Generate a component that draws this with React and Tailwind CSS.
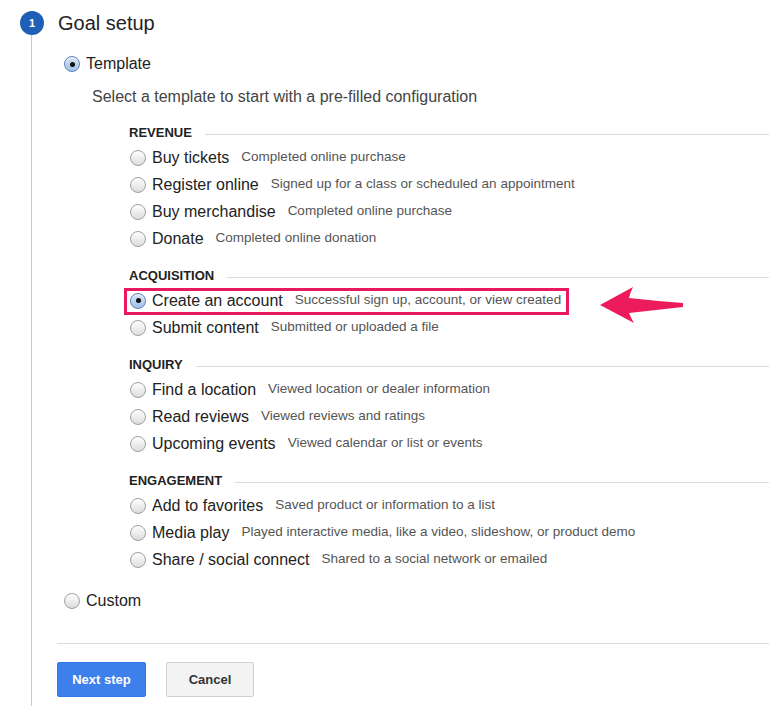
import React from 'react'

const sections = [
  {
    title: 'REVENUE',
    items: [
      ['Buy tickets', 'Completed online purchase'],
      ['Register online', 'Signed up for a class or scheduled an appointment'],
      ['Buy merchandise', 'Completed online purchase'],
      ['Donate', 'Completed online donation'],
    ],
  },
  {
    title: 'ACQUISITION',
    items: [
      ['Create an account', 'Successful sign up, account, or view created', true],
      ['Submit content', 'Submitted or uploaded a file'],
    ],
  },
  {
    title: 'INQUIRY',
    items: [
      ['Find a location', 'Viewed location or dealer information'],
      ['Read reviews', 'Viewed reviews and ratings'],
      ['Upcoming events', 'Viewed calendar or list or events'],
    ],
  },
  {
    title: 'ENGAGEMENT',
    items: [
      ['Add to favorites', 'Saved product or information to a list'],
      ['Media play', 'Played interactive media, like a video, slideshow, or product demo'],
      ['Share / social connect', 'Shared to a social network or emailed'],
    ],
  },
]

function Radio({ checked }) {
  if (checked) {
    return (
      <span className="w-4 h-4 shrink-0 rounded-full border border-[#5b7fb3] bg-gradient-to-b from-[#d6e6fa] to-[#9fc0ea] flex items-center justify-center shadow-[inset_0_1px_1px_rgba(255,255,255,0.8)]">
        <span className="w-[5px] h-[5px] rounded-full bg-[#111]" />
      </span>
    )
  }
  return (
    <span className="w-4 h-4 shrink-0 rounded-full border border-[#a0a0a0] bg-gradient-to-b from-white to-[#dcdcdc]" />
  )
}

function Option({ label, desc, checked }) {
  return (
    <div className="h-[27px] flex">
      <div className="relative h-full flex items-center">
        {checked && (
          <span className="absolute left-[-6px] right-[-8px] top-[1px] bottom-[-1px] border-[3px] border-[#e8195e]" />
        )}
        <Radio checked={checked} />
        <span className="ml-[6px] text-[16px] text-[#222]">{label}</span>
        <span className="ml-[12px] text-[13.5px] text-[#555]">{desc}</span>
      </div>
    </div>
  )
}

export default function App() {
  return (
    <div className="relative bg-white min-h-[706px] flex overflow-hidden" style={{ fontFamily: '"Liberation Sans", Arial, sans-serif' }}>
      <div className="w-[57px] shrink-0 flex flex-col pl-[20px] pt-[11px]">
        <div className="w-6 h-6 rounded-full bg-[#1f5fb5] text-white text-[11px] font-bold flex items-center justify-center">1</div>
        <div className="ml-[11px] w-px flex-1 bg-[#c8c8c8]" />
      </div>

      <div className="flex-1 flex flex-col pb-[9px]">
        <div className="h-[46px] flex items-center text-[20px] text-[#222] pl-px">Goal setup</div>

        <div className="mt-[6px] h-6 flex items-center pl-[7px]">
          <Radio checked />
          <span className="ml-[6px] text-[16px] text-[#222]">Template</span>
        </div>

        <div className="mt-[9px] h-6 flex items-center pl-[35px] text-[16px] text-[#444]">
          Select a template to start with a pre-filled configuration
        </div>

        <div className="pl-[73px] mt-[13px] flex flex-col">
          {sections.map((s, i) => (
            <div key={s.title} className={i === 0 ? '' : 'mt-[13px]'}>
              <div className="h-[22px] flex items-center -ml-px">
                <span className="text-[13px] font-bold text-[#222]">{s.title}</span>
                <span className="ml-[13px] flex-1 h-px bg-[#dcdcdc] mt-[3px]" />
              </div>
              {s.items.map(([label, desc, checked]) => (
                <Option key={label} label={label} desc={desc} checked={checked} />
              ))}
            </div>
          ))}
        </div>

        <div className="mt-[16px] h-6 flex items-center pl-[7px]">
          <Radio />
          <span className="ml-[6px] text-[16px] text-[#222]">Custom</span>
        </div>

        <div className="mt-[30px] h-px bg-[#dcdcdc]" />

        <div className="mt-[18px] flex gap-5">
          <button className="w-[89px] h-[35px] rounded-[2px] border border-[#3079ed] bg-[#3d80ec] text-white text-[13px] font-bold">
            Next step
          </button>
          <button className="w-[88px] h-[35px] rounded-[2px] border border-[#d0d0d0] bg-[#f3f3f3] text-[#333] text-[13px] font-bold">
            Cancel
          </button>
        </div>
      </div>

      <svg className="absolute left-[598px] top-[284px]" width="90" height="44" viewBox="0 0 90 44">
        <path
          d="M2 21 L35 3 Q32 9 31 14 Q58 17 85 19 L85 23 Q58 26 31 29 Q33 34 36 39 Z"
          fill="#ec1c5c"
        />
      </svg>
    </div>
  )
}
